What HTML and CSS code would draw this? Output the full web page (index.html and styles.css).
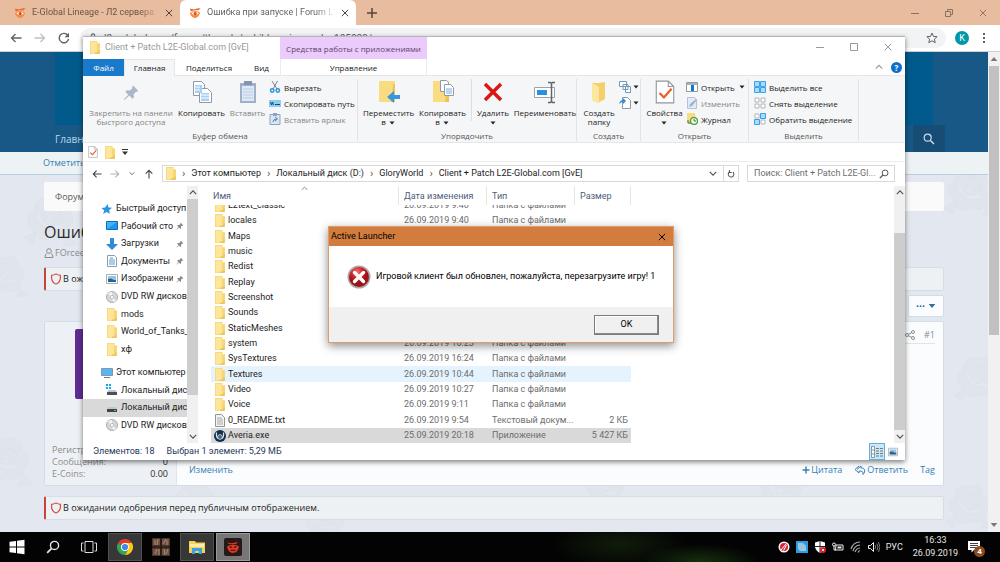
FILE: index.html
```html
<!DOCTYPE html>
<html lang="ru">
<head>
<meta charset="utf-8">
<title>Ошибка при запуске | Forum L2E-Global</title>
<link rel="stylesheet" href="styles.css">
</head>
<body>
<svg class="defs" aria-hidden="true">
  <symbol id="folder" viewBox="0 0 10 13"><path d="M0 0h7.500v2.200H10V13H0z" fill="#f7d774"/><path d="M.8.800h6v11.600h-6z" fill="#fde69b"/><path d="M9 9.500v2.600H5" stroke="#e6bb45" fill="none"/></symbol>
  <symbol id="pin" viewBox="0 0 16 16"><path d="M9.500 1.500l5 5-1.400.9-.8-.2-2.300 2.400.3 2.900-1.400 1.300-3-3L1.500 15l-.6-.6L5 10 2.200 7.200l1.300-1.300 2.900.3 2.400-2.300-.2-.9z"/></symbol>
  <symbol id="disc" viewBox="0 0 12 12"><circle cx="6" cy="6" r="5.500" fill="#d4d7d9" stroke="#a9adb0"/><path d="M6 6L2 2.500A5 5 0 0 1 6 1zM6 6l4 3.500A5 5 0 0 1 7 11z" fill="#f3f4f5"/><circle cx="6" cy="6" r="1.600" fill="#fff" stroke="#a2a6aa" stroke-width=".6"/></symbol>
  <symbol id="eye" viewBox="0 0 12 12"><path d="M.8 1.500Q4 3 7 1.800T11.500 1.600L9.500 3.300Q4.500 2.800 1.800 4.600z" fill="#f26522"/><path d="M.8 6.200Q5.500 2.200 11.200 5.800 9.500 11 5.500 11 2.500 10.500.8 6.200z" fill="#f58a4a"/><path d="M2.300 6.400Q6 3.800 9.800 6.200 6.500 9.300 2.300 6.400z" fill="#fff"/><circle cx="6.200" cy="6.400" r="1.500" fill="#d9480f"/></symbol>
  <symbol id="cross" viewBox="0 0 10 10"><path d="M1 1l8 8M9 1L1 9" stroke="currentColor" fill="none" stroke-width="1.200"/></symbol>
  <symbol id="shield" viewBox="0 0 10 11"><path d="M5 .8C3.800 1.700 2.500 2 1 2v2.500C1 7.500 2.500 9 5 10.200 7.500 9 9 7.500 9 4.500V2C7.500 2 6.200 1.700 5 .8z" fill="none" stroke="#cc3d3d"/></symbol>
  <symbol id="lens" viewBox="0 0 12 12"><circle cx="7.300" cy="4.700" r="3.500" fill="none" stroke="currentColor" stroke-width="1.200"/><path d="M4.800 7.200L1 11" stroke="currentColor" stroke-width="1.500"/></symbol>
  <symbol id="left" viewBox="0 0 12 10"><path d="M11.500 5h-10M5.500 1l-4 4 4 4" fill="none" stroke="currentColor" stroke-width="1.300"/></symbol>
  <symbol id="up" viewBox="0 0 10 6"><path d="M1 5l4-4 4 4" fill="none" stroke="currentColor" stroke-width="1.400"/></symbol>
  <symbol id="tri" viewBox="0 0 6 4"><path d="M.5.500h5L3 3.500z" fill="currentColor"/></symbol>
  <symbol id="checkpage" viewBox="0 0 18 22"><path d="M1 1h11l5 5v15H1z" fill="#fff" stroke="#8f969c"/><path d="M12 1v5h5" fill="none" stroke="#8f969c"/><path d="M4 12l4 4 7-8" fill="none" stroke="#ee5a22" stroke-width="2"/></symbol>
  <symbol id="picture" viewBox="0 0 12 10"><path d="M.5.500h11v9H.5z" fill="#fff" stroke="#a7adb3"/><path d="M2 2h8v6H2z" fill="#8fc4ee"/><path d="M2 5l3-.5L8 6h2v2H2z" fill="#31627d"/></symbol>
  <symbol id="rose" viewBox="0 0 60 60"><path d="M30 8c9-6 17 2 15 10 9 2 10 13 3 18 1 9-9 14-17 9-8 6-19 1-18-8-8-5-6-16 2-18-2-9 7-16 15-11zM30 17c7-3 12 3 11 9s-9 10-15 6-5-12 4-15zM30 22c-5 2-6 7-2 9s9-2 8-6M15 22c5 12 14 19 29 14M21 12c8 0 14 3 20 12M4 46l12-6-3 13zM47 44l10 8-14 2z"/></symbol>
</svg>

<main class="browser">
  <div class="tabstrip">
    <div class="tab"><svg class="i12"><use href="#eye"/></svg><span>E-Global Lineage - Л2 сервера: Interlude</span><button class="x" aria-label="Закрыть вкладку"><svg class="i8"><use href="#cross"/></svg></button></div>
    <div class="tab active"><svg class="i12"><use href="#eye"/></svg><span>Ошибка при запуске | Forum L2E</span><button class="x" aria-label="Закрыть вкладку"><svg class="i8"><use href="#cross"/></svg></button></div>
    <button class="newtab" aria-label="Новая вкладка"><svg viewBox="0 0 10 10" class="i10"><path d="M5 0v10M0 5h10" stroke="currentColor" stroke-width="1.500"/></svg></button>
    <div class="wincontrols">
      <button aria-label="Свернуть"><svg viewBox="0 0 8 8" class="i8"><path d="M0 4.500h8" stroke="currentColor"/></svg></button>
      <button aria-label="Восстановить"><svg viewBox="0 0 8 8" class="i8"><path d="M.5 2.500h5v5h-5zM2.500 2V.5h5v5H6" fill="none" stroke="currentColor"/></svg></button>
      <button aria-label="Закрыть"><svg class="i8"><use href="#cross"/></svg></button>
    </div>
  </div>
  <div class="toolbar">
    <button aria-label="Назад"><svg class="i12"><use href="#left"/></svg></button>
    <button aria-label="Вперед" class="dim flip"><svg class="i12"><use href="#left"/></svg></button>
    <button aria-label="Обновить"><svg class="i12" viewBox="0 0 12 12"><path d="M9.800 3.300A4.700 4.700 0 1 0 10.600 7" fill="none" stroke="currentColor" stroke-width="1.400"/><path d="M11 .8v4.400H6.600z" fill="currentColor"/></svg></button>
    <label class="omnibox">
      <svg viewBox="0 0 10 12" class="i10"><path d="M1.500 5h7v6h-7zM3 5V3a2 2 0 0 1 4 0v2" fill="none" stroke="currentColor" stroke-width="1.300"/></svg>
      <input value="l2e-global.com/forum/threads/oshibka-pri-zapuske.105023/" aria-label="Адрес">
      <svg viewBox="0 0 12 12" class="i12"><path d="M6 1l1.500 3.400 3.600.3-2.700 2.400.8 3.600L6 8.800l-3.200 1.900.8-3.600L.9 4.700l3.600-.3z" fill="none" stroke="currentColor"/></svg>
    </label>
    <span class="profile">K</span>
    <button aria-label="Меню"><svg viewBox="0 0 4 12" class="i12"><path d="M1 1h2v2H1zM1 5h2v2H1zM1 9h2v2H1z" fill="currentColor"/></svg></button>
  </div>
  <div class="viewport">
    <div class="forum">
      <svg class="roses" viewBox="0 0 1000 380" preserveAspectRatio="xMinYMin slice" aria-hidden="true">
        <use href="#rose" x="20" y="40" width="60" height="60"/><use href="#rose" x="-20" y="100" width="50" height="50"/><use href="#rose" x="-24" y="280" width="60" height="60"/><use href="#rose" x="170" y="322" width="50" height="50"/><use href="#rose" x="300" y="346" width="50" height="50"/><use href="#rose" x="580" y="312" width="50" height="50"/><use href="#rose" x="754" y="312" width="54" height="54"/><use href="#rose" x="940" y="10" width="60" height="60"/><use href="#rose" x="950" y="200" width="56" height="56"/><use href="#rose" x="942" y="328" width="54" height="54"/>
      </svg>
      <header class="banner">
        <div class="art"></div>
        <nav class="mainnav"><a href="#">Главная</a><button aria-label="Поиск"><svg class="i12 flip"><use href="#lens"/></svg></button></nav>
      </header>
      <nav class="subnav"><a href="#">Отметить форумы</a></nav>
      <div class="content">
        <div class="crumbs">Форумы</div>
        <h1>Ошибка при запуске</h1>
        <div class="author"><svg viewBox="0 0 9 10" class="i10"><circle cx="4.500" cy="3" r="2.300"/><path d="M2.500 5.500Q.5 6 .5 9.500h8Q8.500 6 6.500 5.500"/></svg>FOrcee</div>
        <div class="notice"><svg class="i12"><use href="#shield"/></svg>В ожидании одобрения перед публичным отображением.</div>
        <div class="pager"><button>•••<svg class="i8"><use href="#tri"/></svg></button></div>
        <article class="post">
          <aside>
            <div class="avatar"></div>
            <dl><dt>Регистрация:</dt><dd></dd><dt>Сообщения:</dt><dd>0</dd><dt>E-Coins:</dt><dd>0.00</dd></dl>
          </aside>
          <div class="postbody">
            <div class="posthead"><svg viewBox="0 0 10 10" class="i10"><path d="M8 2L2 5l6 3" fill="none" stroke="#8c8c8c"/><g fill="#fff" stroke="#8c8c8c"><circle cx="8" cy="2" r="1.500"/><circle cx="2" cy="5" r="1.500"/><circle cx="8" cy="8" r="1.500"/></g></svg><span>#1</span></div>
            <div class="postfoot"><a href="#">Изменить</a><span class="gap"></span><a href="#"><svg viewBox="0 0 8 8" class="i8"><path d="M4 .5v7M.5 4h7" stroke="currentColor" stroke-width="1.400"/></svg>Цитата</a><a href="#"><svg viewBox="0 0 12 10" class="i12"><path d="M5 1L1 4.500 5 8V6c3 0 4.500.5 4 3.500C12 6 11 3 7 3V1L3 4.500" fill="none" stroke="currentColor"/></svg>Ответить</a><a href="#">Tag</a></div>
          </div>
        </article>
        <div class="notice last"><svg class="i12"><use href="#shield"/></svg>В ожидании одобрения перед публичным отображением.</div>
      </div>
    </div>
    <div class="scroll page"><svg class="i8 turn"><use href="#tri"/></svg><i></i><svg class="i8"><use href="#tri"/></svg></div>
  </div>
</main>

<section class="explorer">
  <header class="exphead">
    <div class="exptitle"><svg class="fold"><use href="#folder"/></svg>Client + Patch L2E-Global.com [GvE]</div>
    <div class="tooltab">Средства работы с приложениями</div>
    <div class="wincontrols">
      <button aria-label="Свернуть"><svg viewBox="0 0 8 8" class="i8"><path d="M0 4.500h8" stroke="currentColor"/></svg></button>
      <button aria-label="Развернуть"><svg viewBox="0 0 8 8" class="i8"><path d="M.5.500h7v7h-7z" fill="none" stroke="currentColor"/></svg></button>
      <button aria-label="Закрыть"><svg class="i8"><use href="#cross"/></svg></button>
    </div>
  </header>
  <nav class="exptabs">
    <button class="file">Файл</button><button class="on">Главная</button><button class="share">Поделиться</button><button class="view">Вид</button><button class="manage">Управление</button>
    <span class="gap"></span><svg class="i8 muted"><use href="#up"/></svg><b class="help">?</b>
  </nav>
  <div class="ribbon">
    <div class="group g1">
      <div class="tools">
        <button class="big off w84"><svg class="i24" viewBox="0 0 24 24"><use href="#pin" fill="#a9b8c9" x="4" y="4" width="17" height="17"/></svg><span>Закрепить на панели<br>быстрого доступа</span></button>
        <button class="big w50"><svg class="i24" viewBox="0 0 24 24"><g fill="#fff" stroke="#8f9aa5"><path d="M3.500 1.500h8l3 3v11h-11z"/><path d="M9.500 8.500h8l4 4v10h-12z"/></g><path d="M5 5h7v8H5zM11 13h8v8h-8z" fill="#a9cdf3"/><path d="M5 7h5M5 10h5M11 15h8M11 18h8" stroke="#fff"/></svg><span>Копировать</span></button>
        <button class="big off w36"><svg class="i24" viewBox="0 0 24 24"><path d="M4 3h16v20H4z" fill="#9fb1c9"/><path d="M6 6h12v15H6z" fill="#dfe9f6"/><path d="M8 1h8v4H8z" fill="#8395ab"/><path d="M7 9h10M7 12h10M7 15h10M7 18h10" stroke="#b9cbe4"/></svg><span>Вставить</span></button>
        <div class="stack">
          <button><svg class="i12" viewBox="0 0 12 12"><path d="M3 0l5 8M8.500 0L4 8" stroke="#7a8288" fill="none"/><g fill="none" stroke="#2c94d8" stroke-width="1.500"><circle cx="3.200" cy="9.500" r="1.700"/><circle cx="8.800" cy="9.500" r="1.700"/></g></svg>Вырезать</button>
          <button><svg class="i12" viewBox="0 0 12 12"><path d="M0 3h12v7H0z" fill="#8ccdf0"/><path d="M1.500 5l1 3 1-3 1 3M6 7.500h5" stroke="#164b72" fill="none"/></svg>Скопировать путь</button>
          <button class="off"><svg class="i12" viewBox="0 0 12 12"><path d="M1 1.500h10v10H1z" fill="#dce6f2" stroke="#8ea3be"/><path d="M4 0h4v3H4z" fill="#8ea3be"/><path d="M4 9q0-3 4-3M6 4l2.500 2L6 8" fill="none" stroke="#5b7eb0"/></svg>Вставить ярлык</button>
        </div>
      </div><h2>Буфер обмена</h2>
    </div>
    <div class="group g2">
      <div class="tools">
        <button class="big w52"><svg class="i24" viewBox="0 0 24 24"><path d="M2 1h16v21H2z" fill="#f9dc82"/><path d="M16 4h2v18h-4z" fill="#edc457"/><path d="M10 17l7-6v4h6v4h-6v4z" fill="#3b95df"/></svg><span>Переместить<br>в <svg class="dd"><use href="#tri"/></svg></span></button>
        <button class="big w52"><svg class="i24" viewBox="0 0 24 24"><path d="M2 1h16v21H2z" fill="#f9dc82"/><path d="M16 4h2v18h-4z" fill="#edc457"/><g fill="#fff" stroke="#8f9aa5"><path d="M9.500.500h6l2 2v9h-8z"/><path d="M13.500 4.500h6l3 3v8h-9z"/></g><path d="M15 9h6M15 11h6M15 13h6" stroke="#78aee5"/></svg><span>Копировать<br>в <svg class="dd"><use href="#tri"/></svg></span></button>
        <i class="sep"></i>
        <button class="big w36"><svg class="i24" viewBox="0 0 24 24"><path d="M4 4l16 16M20 4L4 20" stroke="#dc1616" stroke-width="3.500"/></svg><span>Удалить<br><svg class="dd"><use href="#tri"/></svg></span></button>
        <button class="big w64"><svg class="i24" viewBox="0 0 24 24"><path d="M1.500 7.500h20v10h-20z" fill="#fff" stroke="#9aa3ab"/><path d="M4 10h10v5H4z" fill="#2b90e2"/><path d="M15 2.500h2.500l1 1 1-1H22M18.500 3v19M15 22.500h2.500l1-1 1 1H22" fill="none" stroke="#5d666e" stroke-width="1.500"/></svg><span>Переименовать</span></button>
      </div><h2>Упорядочить</h2>
    </div>
    <div class="group g3">
      <div class="tools">
        <button class="big w36"><svg class="i24" viewBox="0 0 24 24"><path d="M5 3h7l6-1v17l-7 4-6-3z" fill="#f5d06a"/><path d="M5 3l7 4v16l-7-3z" fill="#fde79f"/></svg><span>Создать<br>папку</span></button>
        <div class="stack mini">
          <button aria-label="Создать элемент"><svg class="i12" viewBox="0 0 12 12"><path d="M.5.500h7v5h-7zM4 3.500h5v5H4zM6.500 5.500h5v6h-5z" fill="#fff" stroke="#6d9cb8"/></svg><svg class="dd"><use href="#tri"/></svg></button>
          <button aria-label="Простой доступ"><svg class="i12" viewBox="0 0 12 12"><path d="M3.500.500h5l3 3v8h-8z" fill="#fff" stroke="#8f9aa5"/><path d="M0 7q1-4 4-4V1l3 3-3 3V5Q2 5 0 7z" fill="#2f8ed4"/></svg><svg class="dd"><use href="#tri"/></svg></button>
        </div>
      </div><h2>Создать</h2>
    </div>
    <div class="group g4">
      <div class="tools">
        <button class="big w36"><svg class="i24"><use href="#checkpage"/></svg><span>Свойства<br><svg class="dd"><use href="#tri"/></svg></span></button>
        <div class="stack">
          <button><svg class="i12" viewBox="0 0 12 12"><path d="M.5 1.500h11v9H.5z" fill="#fff" stroke="#9299a0"/><path d="M1 2h10v2H1z" fill="#aab1b8"/><path d="M5 4h3v6H5z" fill="#1477d4"/></svg>Открыть <svg class="dd"><use href="#tri"/></svg></button>
          <button class="off"><svg class="i12" viewBox="0 0 12 12"><path d="M1.500.500h7l2 2v9h-9z" fill="#e3ebf5" stroke="#b4c3d8"/><path d="M3 10l1-3 6-5 1 1-5 6z" fill="#9cb4d3"/></svg>Изменить</button>
          <button><svg class="i12" viewBox="0 0 12 12"><path d="M1 0h8v10H1z" fill="#f9dc82"/><circle cx="8" cy="8" r="3.500" fill="#fff" stroke="#54a43f" stroke-width="1.500"/><path d="M8 6v2h2M2 7v3h3" stroke="#37782a" fill="none"/></svg>Журнал</button>
        </div>
      </div><h2>Открыть</h2>
    </div>
    <div class="group g5">
      <div class="tools">
        <div class="stack">
          <button><svg class="i12" viewBox="0 0 12 12"><path d="M.5.500h5v5h-5zM6.500.500h5v5h-5zM.5 6.500h5v5h-5zM6.500 6.500h5v5h-5z" fill="#a7dcff" stroke="#3ba0e6"/></svg>Выделить все</button>
          <button><svg class="i12" viewBox="0 0 12 12"><path d="M1 1h4v4H1zM7 1h4v4H7zM1 7h4v4H1zM7 7h4v4H7z" fill="#fff" stroke="#b0b5ba"/></svg>Снять выделение</button>
          <button><svg class="i12" viewBox="0 0 12 12"><path d="M1 1h4v4H1zM7 7h4v4H7z" fill="#fff" stroke="#b0b5ba"/><path d="M6.500.500h5v5h-5zM.5 6.500h5v5h-5z" fill="#a7dcff" stroke="#3ba0e6"/></svg>Обратить выделение</button>
        </div>
      </div><h2>Выделить</h2>
    </div>
  </div>
  <div class="quick"><svg class="i12"><use href="#checkpage"/></svg><svg class="fold"><use href="#folder"/></svg><svg class="i8" viewBox="0 0 8 8"><path d="M1 1.500h6" stroke="#333"/><path d="M1 3.500h6l-3 3.500z" fill="#333"/></svg></div>
  <div class="addressrow">
    <button aria-label="Назад"><svg class="i10"><use href="#left"/></svg></button>
    <button aria-label="Вперед" class="flip dim"><svg class="i10"><use href="#left"/></svg></button>
    <button aria-label="Недавние"><svg class="chev small"><use href="#up"/></svg></button>
    <button aria-label="Вверх" class="quarter"><svg class="i10"><use href="#left"/></svg></button>
    <div class="address"><svg class="fold"><use href="#folder"/></svg><i>›</i><span>Этот компьютер</span><i>›</i><span>Локальный диск (D:)</span><i>›</i><span>GloryWorld</span><i>›</i><span>Client + Patch L2E-Global.com [GvE]</span><span class="gap"></span><svg class="chev"><use href="#up"/></svg><button aria-label="Обновить"><svg class="i8" viewBox="0 0 10 10"><path d="M3 2.500a3.500 3.500 0 1 0 4.500.3M3 0v3h3" fill="none" stroke="#555" stroke-width="1.300"/></svg></button></div>
    <label class="search"><input placeholder="Поиск: Client + Patch L2E-Gl..." aria-label="Поиск"><svg class="i10"><use href="#lens"/></svg></label>
  </div>
  <div class="panes">
    <nav class="tree">
      <ul class="t1">
        <li class="root"><svg class="i12" viewBox="0 0 12 12"><path d="M6.500 1l1 3.400 3.700.4-3 2.300.6 3.900-3.100-2L2 11l1.300-3.600L.5 5l3.700-.5z" fill="#2a96e0"/></svg>Быстрый доступ</li>
        <li><svg class="i12" viewBox="0 0 12 12"><path d="M.5 1.500h11v8H.5z" fill="#1c97ee" stroke="#0e6fb8"/><path d="M1 2h10L1 9z" fill="#42b2fa"/></svg><span>Рабочий сто.</span><svg class="i8 p"><use href="#pin"/></svg></li>
        <li><svg class="i12" viewBox="0 0 12 12"><path d="M4 0h4v6h4l-6 6-6-6h4z" fill="#2f8ad8"/></svg><span>Загрузки</span><svg class="i8 p"><use href="#pin"/></svg></li>
        <li><svg class="i12" viewBox="0 0 12 12"><path d="M1.500.500h7l2 2v9h-9z" fill="#fff" stroke="#929ba3"/><path d="M3 5h6M3 7h6M3 9h6M4 3h3" stroke="#4c9bd3"/></svg><span>Документы</span><svg class="i8 p"><use href="#pin"/></svg></li>
        <li><svg class="i12"><use href="#picture"/></svg><span>Изображени</span><svg class="i8 p"><use href="#pin"/></svg></li>
        <li><svg class="i12"><use href="#disc"/></svg><span>DVD RW дисков</span></li>
        <li><svg class="fold"><use href="#folder"/></svg><span>mods</span></li>
        <li><svg class="fold"><use href="#folder"/></svg><span>World_of_Tanks_</span></li>
        <li><svg class="fold"><use href="#folder"/></svg><span>хф</span></li>
      </ul>
      <ul class="t2">
        <li class="root"><svg class="i12" viewBox="0 0 12 12"><path d="M.5 1.500h11v7H.5z" fill="#55b8f2" stroke="#8b98a3"/><path d="M3 10.500h6" stroke="#6f7b85"/></svg>Этот компьютер</li>
        <li><svg class="i12" viewBox="0 0 12 12"><path d="M1 8h10v3H1z" fill="#4b5155"/><path d="M1 8l1.500-2h7L11 8z" fill="#c2c7ca"/><path d="M0 0h2v2H0zM3 0h2v2H3zM0 3h2v2H0zM3 3h2v2H3z" fill="#19a5e8"/></svg><span>Локальный дис</span></li>
        <li class="sel"><svg class="i12" viewBox="0 0 12 12"><path d="M1 7h10v3H1z" fill="#3f4649"/><path d="M1 7l1.500-2h7L11 7z" fill="#c2c7ca"/><path d="M8 8h2v1H8z" fill="#52c878"/></svg><span>Локальный дис</span></li>
        <li><svg class="i12"><use href="#disc"/></svg><span>DVD RW дисков</span></li>
      </ul>
    </nav>
    <div class="scroll side"><svg class="chev turnback"><use href="#up"/></svg><i></i><svg class="chev"><use href="#up"/></svg></div>
    <table class="files">
      <thead><tr><th>Имя<svg class="i8 sort"><use href="#up"/></svg></th><th>Дата изменения</th><th>Тип</th><th>Размер</th></tr></thead>
      <tbody>
        <tr><td><svg class="fold"><use href="#folder"/></svg>L2text_classic</td><td>26.09.2019 9:40</td><td>Папка с файлами</td><td></td></tr>
        <tr><td><svg class="fold"><use href="#folder"/></svg>locales</td><td>26.09.2019 9:40</td><td>Папка с файлами</td><td></td></tr>
        <tr><td><svg class="fold"><use href="#folder"/></svg>Maps</td><td>26.09.2019 9:40</td><td>Папка с файлами</td><td></td></tr>
        <tr><td><svg class="fold"><use href="#folder"/></svg>music</td><td>26.09.2019 9:45</td><td>Папка с файлами</td><td></td></tr>
        <tr><td><svg class="fold"><use href="#folder"/></svg>Redist</td><td>26.09.2019 9:45</td><td>Папка с файлами</td><td></td></tr>
        <tr><td><svg class="fold"><use href="#folder"/></svg>Replay</td><td>26.09.2019 9:45</td><td>Папка с файлами</td><td></td></tr>
        <tr><td><svg class="fold"><use href="#folder"/></svg>Screenshot</td><td>26.09.2019 9:45</td><td>Папка с файлами</td><td></td></tr>
        <tr><td><svg class="fold"><use href="#folder"/></svg>Sounds</td><td>26.09.2019 9:50</td><td>Папка с файлами</td><td></td></tr>
        <tr><td><svg class="fold"><use href="#folder"/></svg>StaticMeshes</td><td>26.09.2019 9:55</td><td>Папка с файлами</td><td></td></tr>
        <tr><td><svg class="fold"><use href="#folder"/></svg>system</td><td>26.09.2019 16:23</td><td>Папка с файлами</td><td></td></tr>
        <tr><td><svg class="fold"><use href="#folder"/></svg>SysTextures</td><td>26.09.2019 16:24</td><td>Папка с файлами</td><td></td></tr>
        <tr class="hover"><td><svg class="fold"><use href="#folder"/></svg>Textures</td><td>26.09.2019 10:44</td><td>Папка с файлами</td><td></td></tr>
        <tr><td><svg class="fold"><use href="#folder"/></svg>Video</td><td>26.09.2019 10:27</td><td>Папка с файлами</td><td></td></tr>
        <tr><td><svg class="fold"><use href="#folder"/></svg>Voice</td><td>26.09.2019 9:11</td><td>Папка с файлами</td><td></td></tr>
        <tr><td><svg class="fold" viewBox="0 0 10 13"><path d="M.5.500h6l3 3v9h-9z" fill="#f4f4f4" stroke="#939393"/><path d="M2 4h5M2 6h6M2 8h6M2 10h6" stroke="#a9a9a9"/></svg>0_README.txt</td><td>26.09.2019 9:54</td><td>Текстовый докум...</td><td>2 КБ</td></tr>
        <tr class="sel"><td><svg class="i12" viewBox="0 0 12 12"><circle cx="6" cy="6" r="6" fill="#12304a"/><path d="M2.500 2.500Q2 7 4 8.500M9.500 2.500Q10 7 8 8.500" stroke="#d9e7f2" fill="none" stroke-width="1.200"/><circle cx="6" cy="7" r="2.300" fill="none" stroke="#d9e7f2"/><circle cx="6" cy="7" r=".8" fill="#8cc4ea"/></svg>Averia.exe</td><td>25.09.2019 20:18</td><td>Приложение</td><td>5 427 КБ</td></tr>
      </tbody>
    </table>
    <span class="gap"></span>
    <div class="scroll side main"><svg class="chev turnback"><use href="#up"/></svg><i></i><svg class="chev"><use href="#up"/></svg></div>
  </div>
  <footer class="status"><span>Элементов: 18</span><span>Выбран 1 элемент: 5,29 МБ</span><span class="gap"></span>
    <button class="picked" aria-label="Таблица"><svg class="i12" viewBox="0 0 12 12"><path d="M.5.500h3v11h-3zM.5 4h3M.5 8h3" fill="#fff" stroke="#8d979e"/><path d="M5 2.500h3M5 5h3M5 7.500h3M5 10h3M9 2.500h3M9 5h3M9 7.500h3M9 10h3" stroke="#6b767e"/></svg></button><button aria-label="Эскизы"><svg class="i10"><use href="#picture"/></svg></button></footer>
</section>

<section class="dialog" role="dialog" aria-labelledby="dlg">
  <header><span id="dlg">Active Launcher</span><button aria-label="Закрыть"><svg class="i8"><use href="#cross"/></svg></button></header>
  <div class="message"><svg viewBox="0 0 24 24" class="i24"><defs><radialGradient id="red" cx=".4" cy=".25"><stop offset="0" stop-color="#f07a74"/><stop offset=".6" stop-color="#cf2027"/><stop offset="1" stop-color="#9f1218"/></radialGradient></defs><circle cx="12" cy="12" r="11.500" fill="#a9a9a9"/><circle cx="12" cy="12" r="10" fill="url(#red)"/><path d="M7.500 7.500l9 9M16.500 7.500l-9 9" stroke="#fff" stroke-width="3.400" stroke-linecap="round"/></svg><p>Игровой клиент был обновлен, пожалуйста, перезагрузите игру! 1</p></div>
  <footer><button>OK</button></footer>
</section>

<footer class="taskbar">
  <button aria-label="Пуск"><svg class="i16" viewBox="0 0 16 16"><path d="M.5 2.800L7 2v5.600H.5zM8 1.800L15.500.800v6.800H8zM.5 8.500H7v5.600l-6.500-.9zM8 8.500h7.500v6.800L8 14.300z" fill="#fff"/></svg></button>
  <button aria-label="Поиск"><svg class="i14"><use href="#lens"/></svg></button>
  <button aria-label="Представление задач"><svg class="i16" viewBox="0 0 16 16"><path d="M4 2.500h8v11H4zM2.500 4H.5v8h2M13.500 4h2v8h-2" fill="none" stroke="#ddd"/></svg></button>
  <button class="tile" aria-label="Chrome"><svg class="i16" viewBox="0 0 16 16"><path d="M8 8L1.070 4A8 8 0 0 1 14.930 4H8z" fill="#e33b2e"/><path d="M8 8l-6.930-4A8 8 0 0 0 8 16l3.500-6z" fill="#33a354"/><path d="M8 4h6.930A8 8 0 0 1 8 16l3.500-6z" fill="#fdc912"/><circle cx="8" cy="8" r="4" fill="#fff"/><circle cx="8" cy="8" r="3.100" fill="#4486f0"/></svg></button>
  <button aria-label="Игра"><svg class="i18" viewBox="0 0 18 18"><path d="M0 0h18v18H0z" fill="#4e3428"/><path d="M1 1h7v6H1zM10 1h7v6h-7zM1 11h7v6H1zM10 11h7v6h-7z" fill="#705343"/><path d="M3 2v5M6 1l-1 6M11 6l3-5M15 2v5M2 9h14M3 16l2-5M7 11v6M12 11l1 6M16 11l-2 5" stroke="#b09a88" stroke-width=".8" fill="none"/><path d="M9 0v18M0 9h18" stroke="#24150f" stroke-width="1.500"/></svg></button>
  <button class="tile" aria-label="Проводник"><svg class="i16" viewBox="0 0 16 16"><path d="M0 2h6l1 1.500h9V14H0z" fill="#f7cf5b"/><path d="M1 5h14v3H1z" fill="#fdeaa8"/><path d="M3 15V9h10v6h-3v-3H6v3z" fill="#35a4df"/></svg></button>
  <button class="tile now" aria-label="Лаунчер"><svg class="i18" viewBox="0 0 18 18"><rect width="18" height="18" rx="2" fill="#27191a"/><path d="M3 4.500Q8 6 14 4L12 6H5z" fill="#e5361f"/><path d="M3 8.500Q9 4.500 15 8.500 14 14.500 9 15 4 14.500 3 8.500z" fill="#e5361f"/><path d="M5 8.800Q7 7.500 8.500 9.500 6.500 10.500 5 8.800zM13 8.800Q11 7.500 9.500 9.500 11.500 10.500 13 8.800z" fill="#27191a"/><path d="M6.500 12.300h5" stroke="#27191a"/></svg></button>
  <span class="gap"></span>
  <div class="tray">
    <svg class="i12" viewBox="0 0 12 12"><circle cx="6" cy="6" r="5.500" fill="#fff"/><circle cx="6" cy="6" r="4" fill="#d62839"/><path d="M3 9l5-6M5.500 9.500L8.500 4" stroke="#fff"/></svg>
    <svg class="i12" viewBox="0 0 12 12"><path d="M0 0h12v12H0z" fill="#2f9be0"/><path d="M2 2h5l3 3v5H4L2 8z" fill="#8cc8ef"/><path d="M3 6q3 3 6-2" fill="none" stroke="#d5b67b"/></svg>
    <svg class="i12" viewBox="0 0 12 12"><path d="M6 0L1 1.500V6q1 4 5 6 4-2 5-6V1.500z" fill="#fff"/><path d="M6 0v12M1 5.500h10" stroke="#222"/><circle cx="9" cy="9" r="3" fill="#e0202b"/><path d="M8 8l2 2M10 8l-2 2" stroke="#fff" stroke-width=".8"/></svg>
    <svg class="i12" viewBox="0 0 12 12"><path d="M4 4h7v5H3.500z" fill="none" stroke="#eee"/><path d="M5.500 5.500h4v2h-4z" fill="#eee"/><circle cx="2" cy="3.500" r="1.500" fill="#111" stroke="#eee"/><path d="M2 5v4h2" stroke="#eee" fill="none"/></svg>
    <svg class="i12" viewBox="0 0 12 12"><path d="M1 8a9 9 0 0 1 9-7M3 10a8 8 0 0 1 7-6M5 11a6 6 0 0 1 5-4M8 11.500a3 3 0 0 1 2-2" fill="none" stroke="#aaa" stroke-width="1.200"/></svg>
    <svg class="i12" viewBox="0 0 12 12"><path d="M.5 4.500h2l3-3v9l-3-3h-2z" fill="none" stroke="#eee"/><path d="M7 4q1.500 2 0 4M8.800 2.500q2.500 3.500 0 7M10.500 1q3 5 0 10" fill="none" stroke="#999" stroke-width=".8"/></svg>
    <span>РУС</span>
    <time>16:33<br>26.09.2019</time>
    <div class="notify"><svg class="i12" viewBox="0 0 12 12"><path d="M0 0h12v9H6l-2.500 2.500V9H0z" fill="#fff"/><path d="M2 2.500h8M2 4.500h8M2 6.500h8" stroke="#111" stroke-width=".8"/></svg><b>4</b></div>
  </div>
</footer>
</body>
</html>
```
FILE: styles.css
```css
* { box-sizing: border-box; }
body { margin: 0; height: 100vh; overflow: hidden; display: flex; flex-direction: column; position: relative; font: 9px/11px Roboto, "Noto Sans", sans-serif; color: #1c1c1c; }
button { font: inherit; color: inherit; background: none; border: 0; padding: 0; margin: 0; display: flex; align-items: center; justify-content: center; white-space: nowrap; }
input { font: inherit; color: inherit; background: none; border: 0; padding: 0; min-width: 0; flex: 1; outline: 0; }
a { color: #377fb3; text-decoration: none; }
svg { flex: none; display: block; }
ul { list-style: none; margin: 0; padding: 0; }
.defs { position: absolute; width: 0; height: 0; }
.gap { flex: 1; }
.i8 { width: 8px; height: 8px; }
.i10 { width: 10px; height: 10px; }
.i12 { width: 12px; height: 12px; }
.i14 { width: 14px; height: 14px; }
.i16 { width: 16px; height: 16px; }
.i18 { width: 18px; height: 18px; }
.i24 { width: 24px; height: 24px; }
.fold { width: 10px; height: 13px; }
.chev { width: 8px; height: 5px; transform: rotate(180deg); color: #505050; }
.small { width: 6px; margin: 0 1px; }
.flip { transform: scaleX(-1); }
.turn { transform: rotate(180deg); }
.turnback { transform: none; }
.quarter { transform: rotate(90deg); }
.dim { opacity: .4; }

/* Browser */
.browser { flex: 1; min-height: 0; display: flex; flex-direction: column; }
.tabstrip { height: 25px; background: #e8bd9f; display: flex; align-items: center; color: #6d5243; }
.tab { display: flex; align-items: center; gap: 6px; width: 180px; height: 25px; padding: 0 7px 0 14px; }
.tab span { flex: 1; overflow: hidden; white-space: nowrap; mask-image: linear-gradient(90deg, #000 85%, transparent); }
.tab .x { color: #4a3c34; }
.tab.active { background: #fff; color: #5f6368; border-radius: 6px 6px 0 0; width: 176px; padding-left: 9px; }
.newtab { width: 32px; color: #54443a; }
.wincontrols { display: flex; margin-left: auto; color: #8d7263; }
.wincontrols button { width: 34px; height: 20px; }
.toolbar { height: 27px; background: #fff; border-bottom: 1px solid #cfcfcf; display: flex; align-items: center; color: #5f6368; padding: 0 10px; gap: 12px; }
.omnibox { flex: 1; height: 20px; background: #f1f3f4; border-radius: 10px; display: flex; align-items: center; gap: 6px; padding: 0 8px; font-size: 10px; margin-left: -2px; }
.profile { width: 14px; height: 14px; border-radius: 50%; background: #0097a7; color: #fff; text-align: center; line-height: 14px; margin: 0 -3px; }
.viewport { flex: 1; min-height: 0; display: flex; }
.forum { flex: 1; min-width: 0; background: #e3e8f0; position: relative; overflow: hidden; font-family: "Open Sans", "Noto Sans", sans-serif; line-height: 12px; }
.roses { position: absolute; left: 0; top: 100px; width: 100%; height: 380px; fill: #e0e5eb; stroke: #dbe0e7; stroke-width: 1; opacity: .7; }
.banner { background: #185886; height: 100px; position: relative; padding: 0 55px; }
.art { height: 73px; background: #005a8c; }
.mainnav { height: 27px; display: flex; align-items: center; font-size: 10px; margin-right: -12px; }
.mainnav a { color: #b8d6ea; }
.mainnav button { margin-left: auto; width: 32px; height: 27px; background: #174c74; color: #c6dcea; }
.subnav { position: relative; height: 23px; background: #edf2f5; border-bottom: 1px solid #b9cfe0; padding: 5px 43px; }
.content { position: relative; padding: 7px 44px 0; }
.crumbs { background: #fafafa; height: 29px; border-radius: 2px; padding: 9px 11px; color: #5a5a5a; }
h1 { font-size: 16px; line-height: 22px; font-weight: 400; margin: 10px 0 4px; color: #2c2c2c; }
.author { display: flex; gap: 1px; align-items: center; color: #8c8c8c; height: 12px; }
.author svg { fill: none; stroke: #8c8c8c; }
.notice { display: flex; align-items: center; gap: 1px; height: 24px; margin-top: 8px; background: #eef1f4; border: 1px solid #d5dee6; border-left: 2px solid #c8433c; border-radius: 2px; padding-left: 4px; }
.pager { display: flex; justify-content: flex-end; margin: 4px 0; }
.pager button { width: 36px; height: 22px; background: #fafcfd; border: 1px solid #cfdde8; border-radius: 2px; color: #2f6f9f; gap: 3px; font-size: 8px; }
.post { display: flex; height: 165px; border: 1px solid #d3dde8; border-radius: 2px; background: #fafcfe; }
.post aside { width: 132px; background: #edf1f5; border-right: 1px solid #dde5ed; padding: 7px 8px 5px 7px; display: flex; flex-direction: column; justify-content: space-between; }
.avatar { width: 70px; height: 70px; background: #5f2c91; margin-left: 23px; border-radius: 2px; }
dl { margin: 0; display: grid; grid-template-columns: 1fr auto; color: #8c8c8c; }
dd { margin: 0; color: #2c2c2c; text-align: right; }
.postbody { flex: 1; padding: 5px 8px 9px 12px; display: flex; flex-direction: column; justify-content: space-between; }
.posthead { display: flex; justify-content: flex-end; align-items: center; gap: 9px; height: 17px; border-bottom: 1px solid #dde5ee; color: #8c8c8c; }
.postfoot { display: flex; gap: 12px; }
.postfoot a { display: flex; align-items: center; gap: 1px; }
.notice.last { margin-top: 10px; }
.scroll { display: flex; flex-direction: column; align-items: center; color: #777; }
.scroll i { width: 100%; background: #cdcdcd; }
.page { width: 12px; background: #f1f1f1; padding: 3px 1px; gap: 3px; }
.page i { height: 269px; background: #c1c1c1; margin-bottom: auto; }

/* Explorer window */
.explorer { position: absolute; left: 83px; right: 95px; top: 36px; bottom: 102px; background: #fff; display: flex; flex-direction: column; border-top: 1px solid #b5b5b5; box-shadow: 0 2px 5px rgba(0,0,0,.5); }
.exphead { height: 22px; display: flex; color: #999; }
.exptitle { width: 197px; display: flex; align-items: center; gap: 5px; padding: 0 0 2px 7px; white-space: nowrap; }
.tooltab { width: 147px; background: #ebcbfb; color: #5f416c; display: flex; align-items: center; justify-content: center; white-space: nowrap; }
.tooltab, .exptabs, .ribbon { font: 8px/11px "Open Sans", "Noto Sans", sans-serif; }
.exphead .wincontrols { color: #999; }
.exptabs { height: 17px; display: flex; align-items: center; border-bottom: 1px solid #e4e6e8; padding-right: 3px; gap: 0; color: #222; }
.exptabs button { height: 17px; }
.exptabs .file { width: 41px; background: #1979ca; color: #fff; }
.exptabs .on { width: 51px; background: #f5f6f7; border: 1px solid #e4e6e8; border-bottom: 0; }
.exptabs .share { width: 68px; }
.exptabs .view { width: 37px; }
.exptabs .manage { width: 147px; border: 1px solid #ececec; border-width: 0 1px; }
.muted { color: #999; margin-right: 8px; }
.help { width: 11px; height: 11px; border-radius: 50%; background: #0e6fc9; color: #fff; text-align: center; }
.ribbon { height: 67px; background: #f5f6f7; border-bottom: 1px solid #e4e6e8; display: flex; color: #222; }
.group { border-right: 1px solid #e1e3e5; margin: 3px 0 1px; display: flex; flex-direction: column; justify-content: space-between; }
.group h2 { font: inherit; margin: 0; text-align: center; color: #555; }
.g1 { width: 275px; }
.g2 { width: 219px; }
.g3 { width: 64px; }
.g4 { width: 108px; }
.g5 { width: 110px; }
.tools { display: flex; padding-left: 5px; gap: 3px; }
.big { flex-direction: column; align-items: center; justify-content: flex-start; gap: 4px; height: 50px; padding-top: 1px; line-height: 9px; text-align: center; }
.big span { text-align: center; }
.w84 { width: 86px; }
.w64 { width: 62px; }
.w52 { width: 52px; }
.w50 { width: 49px; }
.w36 { width: 37px; }
.off { color: #858585; }
.dd { width: 6px; height: 4px; display: inline-block; margin: 0 1px; }
.stack { display: flex; flex-direction: column; }
.stack button { height: 16px; justify-content: flex-start; gap: 3px; }
.mini button { gap: 1px; }
.sep { width: 1px; height: 42px; background: #dcdfe1; }
.quick { height: 19px; border-bottom: 1px solid #ededed; display: flex; align-items: center; gap: 6px; padding-left: 4px; }
.addressrow { height: 23px; display: flex; align-items: center; padding: 0 10px 0 9px; gap: 8px; color: #444; }
.address { flex: 1; height: 17px; border: 1px solid #d9d9d9; display: flex; align-items: center; gap: 6px; padding-left: 3px; color: #1c1c1c; white-space: nowrap; }
.address i { font-style: normal; font-size: 11px; color: #555; }
.address button { width: 15px; height: 15px; border-left: 1px solid #d9d9d9; }
.search { width: 148px; height: 17px; border: 1px solid #d9d9d9; display: flex; align-items: center; padding: 0 5px 0 6px; color: #555; }
.search input::placeholder { color: #6d6d6d; opacity: 1; }
.panes { flex: 1; min-height: 0; display: flex; padding-top: 1px; }
.tree { width: 104px; padding-top: 14px; display: flex; flex-direction: column; gap: 6px; overflow: hidden; }
.t1, .t2 { display: grid; grid-auto-rows: 1fr; }
.t1 { height: 158px; }
.t2 { height: 70px; }
.tree li { display: flex; align-items: center; gap: 3px; padding-left: 23px; white-space: nowrap; overflow: hidden; min-width: 0; }
.tree .root { padding-left: 18px; }
.tree span { flex: 1; overflow: hidden; }
.tree .fold { margin: 0 1px; }
.tree .p { fill: #7f8a94; margin-right: 3px; }
.sel { background: #d9d9d9; }
.side { width: 11px; background: #f0f0f0; padding: 4px 0; gap: 4px; }
.side i { flex: none; height: 196px; margin-bottom: auto; }
.main i { height: 197px; margin-top: auto; margin-bottom: 0; }
.files { display: grid; grid-template-rows: 19px 1fr; border-collapse: collapse; margin-left: 13px; width: 420px; max-width: 60%; }
.files tr { display: grid; grid-template-columns: 188px 88px 88px 56px; height: 15px; align-items: center; }
.files thead, .files tbody { display: grid; min-height: 0; }
.files tbody { overflow: hidden; align-content: end; }
.files tbody tr:nth-child(3n) { height: 16px; }
.files thead tr { height: 19px; }
th, td { padding: 0; text-align: left; font-weight: 400; white-space: nowrap; color: #6d6d6d; padding-left: 5px; }
th { color: #4c607a; border-right: 1px solid #e5e5e5; height: 19px; padding-top: 5px; }
th:first-child { padding-left: 2px; display: flex; align-items: flex-start; }
.sort { margin: -5px auto 0 70px; color: #888; width: 7px; height: 5px; }
td:first-child { color: #1c1c1c; display: flex; align-items: center; gap: 3px; padding-left: 4px; }
td:first-child .i12 { margin: 0 -1px; }
td:last-child { text-align: right; padding-right: 3px; }
.hover { background: #e5f3ff; }
.status { height: 17px; display: flex; align-items: center; padding: 0 4px 0 10px; color: #1e395b; }
.status span + span { margin-left: 12px; }
.status button { width: 16px; height: 17px; }
.status .picked { background: #cce8f8; border: 1px solid #5eb3dc; }

/* Message box */
.dialog { position: absolute; left: 328px; top: 226px; width: 346px; background: #fff; border: 1px solid #dc9c6c; box-shadow: 0 3px 9px rgba(0,0,0,.45); color: #000; }
.dialog header { height: 19px; background: #d27d3d; display: flex; align-items: center; justify-content: space-between; padding: 0 7px 0 2px; }
.message { height: 61px; display: flex; align-items: center; gap: 5px; padding-left: 18px; }
.message p { margin: 0; white-space: nowrap; }
.dialog footer { height: 35px; background: #f0f0f0; display: flex; align-items: center; justify-content: flex-end; padding-right: 14px; }
.dialog footer button { width: 65px; height: 20px; border: 1px solid #7a7a7a; box-shadow: inset -1px -1px #8a8a8a, inset 1px 1px #fff; }

/* Taskbar */
.taskbar { height: 30px; background: radial-gradient(ellipse 60px 18px at 70% 100%, #17300f, transparent), radial-gradient(ellipse 70px 24px at 62% 40%, #101c0a, transparent), #030303; display: flex; align-items: center; color: #e6e6e6; gap: 2px; }
.taskbar button { width: 34px; height: 28px; }
.taskbar .tile { background: #373737; border: 1px solid #505050; }
.taskbar .now { background: #777; border-color: #9a9a9a; }
.tray { display: flex; align-items: center; gap: 6px; padding-right: 20px; }
.tray time { text-align: center; line-height: 13px; margin: 0 4px; }
.notify { position: relative; }
.notify b { position: absolute; left: 6px; top: 5px; width: 11px; height: 11px; border-radius: 50%; background: #8c4a1e; color: #fff; font-size: 8px; text-align: center; }
```
